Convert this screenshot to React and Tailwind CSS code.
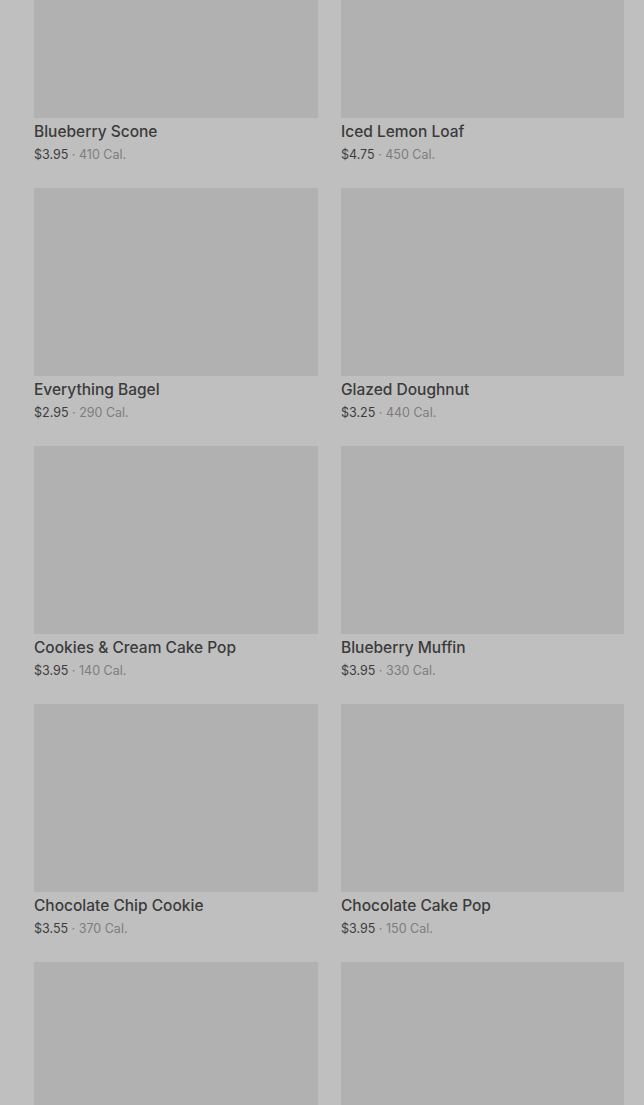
import React from "react";

const items = [
  { name: "Blueberry Scone", price: "$3.95", cal: "410 Cal." },
  { name: "Iced Lemon Loaf", price: "$4.75", cal: "450 Cal." },
  { name: "Everything Bagel", price: "$2.95", cal: "290 Cal." },
  { name: "Glazed Doughnut", price: "$3.25", cal: "440 Cal." },
  { name: "Cookies & Cream Cake Pop", price: "$3.95", cal: "140 Cal." },
  { name: "Blueberry Muffin", price: "$3.95", cal: "330 Cal." },
  { name: "Chocolate Chip Cookie", price: "$3.55", cal: "370 Cal." },
  { name: "Chocolate Cake Pop", price: "$3.95", cal: "150 Cal." },
  { name: "", price: "", cal: "" },
  { name: "", price: "", cal: "" },
];

const Card = ({ item }) => {
  return (
    <div className="flex flex-col pb-[22px]">
      <div className="h-[188px] bg-[#b1b1b1]" />
      <div className="mt-[2px] text-[15.5px] leading-[24px] font-medium text-[#3b3b3b]">
        {item.name}
      </div>
      <div className="h-[22px] text-[12.5px] leading-[22px] text-[#3d3d3d]">
        {item.price && (
          <>
            {item.price}
            <span className="text-[#7d7d7d]"> · {item.cal}</span>
          </>
        )}
      </div>
    </div>
  );
};

const App = () => {
  return (
    <div
      className="h-[1105px] overflow-hidden bg-[#bfbfbf]"
      style={{ fontFamily: "Inter, 'Noto Sans', sans-serif" }}
    >
      <div className="-mt-[70px] grid grid-cols-[284px_283px] gap-x-[23px] pl-[34px] pr-[20px]">
        {items.map((item, i) => (
          <Card key={i} item={item} />
        ))}
      </div>
    </div>
  );
};

export default App;
